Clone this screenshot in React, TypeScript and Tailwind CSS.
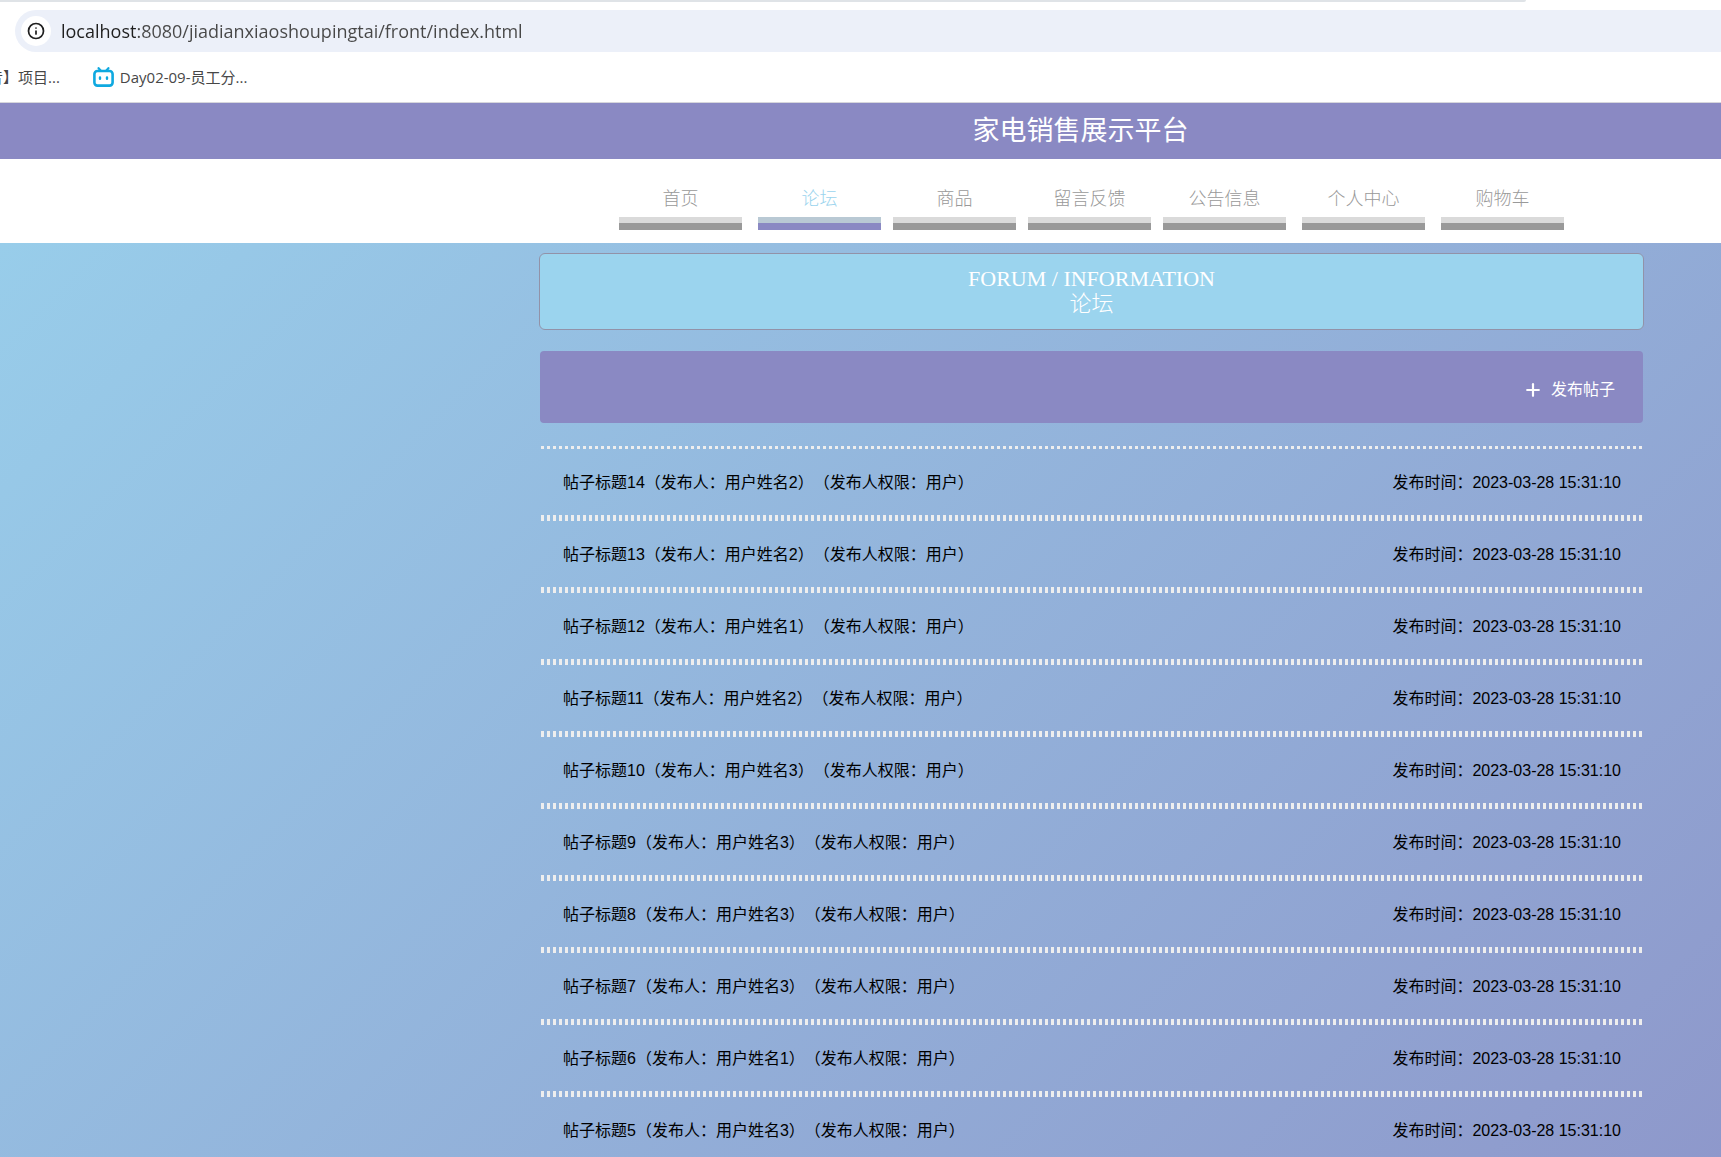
import React from "react";
import { Info, Plus } from "lucide-react";

interface NavItem {
  label: string;
  gap: string;
  active?: boolean;
}

interface Post {
  id: number;
  author: number;
}

const navItems: NavItem[] = [
  { label: "首页", gap: "" },
  { label: "论坛", gap: "ml-4", active: true },
  { label: "商品", gap: "ml-3" },
  { label: "留言反馈", gap: "ml-3" },
  { label: "公告信息", gap: "ml-3" },
  { label: "个人中心", gap: "ml-4" },
  { label: "购物车", gap: "ml-4" },
];

const posts: Post[] = [
  { id: 14, author: 2 },
  { id: 13, author: 2 },
  { id: 12, author: 1 },
  { id: 11, author: 2 },
  { id: 10, author: 3 },
  { id: 9, author: 3 },
  { id: 8, author: 3 },
  { id: 7, author: 3 },
  { id: 6, author: 1 },
  { id: 5, author: 3 },
];

const BilibiliIcon: React.FC = () => (
  <svg width="21" height="20" viewBox="0 0 21 20" fill="none" stroke="#0fa9e0" strokeLinecap="round">
    <path d="M5.6 1.2 7.8 3.8M15.4 1.2 13.2 3.8" strokeWidth="2.2" />
    <rect x="1.4" y="4" width="18.2" height="14.6" rx="3" strokeWidth="2.6" />
    <path d="M7 10.4v1.4M14 10.4v1.4" strokeWidth="2.4" />
  </svg>
);

const BrowserBar: React.FC = () => (
  <div className="h-[103px] shrink-0 border-b border-[#d6d6dc] bg-white font-['Open_Sans','Noto_Sans_CJK_SC',sans-serif]">
    <div className="mr-[195px] h-[2px] rounded-br-sm bg-[#dfe3e7]" />
    <div className="mt-2 ml-[15px] flex h-[42px] items-center rounded-l-full bg-[#ecf0f9] pl-[6px]">
      <button aria-label="Site information" className="flex h-[30px] w-[30px] items-center justify-center rounded-full bg-white">
        <Info className="h-[18px] w-[18px] text-[#1f1f1f]" strokeWidth={2.3} />
      </button>
      {/* host part of the address is darker than the path */}
      <input
        aria-label="Address"
        readOnly
        value="localhost:8080/jiadianxiaoshoupingtai/front/index.html"
        className="ml-[10px] flex-1 bg-[linear-gradient(90deg,#1f1f1f_76px,#474747_76px)] bg-clip-text text-[18px] text-transparent outline-none"
      />
    </div>
    <div className="mt-[15px] flex h-5 items-center overflow-hidden text-[15px] whitespace-nowrap text-[#474747]">
      <a href="#" className="-ml-[12px]">
        音】项目...
      </a>
      <a href="#" className="ml-[33px] flex items-center gap-[6px]">
        <BilibiliIcon />
        Day02-09-员工分...
      </a>
    </div>
  </div>
);

const NavTab: React.FC<NavItem> = ({ label, gap, active }) => (
  <a href="#" className={`flex w-[123px] flex-col items-center ${gap}`}>
    <span className={`h-[27px] text-[18px] leading-[18px] font-light ${active ? "text-[#9bd4ee]" : "text-[#999999]"}`}>
      {label}
    </span>
    <span className={`h-[6px] w-full ${active ? "bg-[#b9c9d4]" : "bg-[#dadada]"}`} />
    <span className={`h-[7px] w-full ${active ? "bg-[#8a89c3]" : "bg-[#999999]"}`} />
  </a>
);

const DottedLine: React.FC<{ thick?: boolean }> = ({ thick }) => (
  <div
    className={`bg-[repeating-linear-gradient(90deg,transparent_0_1px,#eeeeee_1px_4px,transparent_4px_6px)] ${
      thick ? "h-[6px]" : "h-[3px]"
    }`}
  />
);

const PostRow: React.FC<Post> = ({ id, author }) => (
  <li>
    <a href="#" className="flex h-[66px] items-center justify-between pt-px pr-[22px] pl-[23px]">
      <span>{`帖子标题${id}（发布人：用户姓名${author}）（发布人权限：用户）`}</span>
      <span>发布时间：2023-03-28 15:31:10</span>
    </a>
    <DottedLine thick />
  </li>
);

const App: React.FC = () => (
  <div className="flex h-screen flex-col overflow-hidden bg-white font-['Liberation_Sans','Noto_Sans_CJK_SC',sans-serif] [text-spacing-trim:space-all]">
    <BrowserBar />
    <header className="shrink-0">
      <h1 className="h-14 bg-[#8a89c3] pl-[440px] text-center text-[27px] leading-[56px] text-white">
        家电销售展示平台
      </h1>
      <nav className="flex h-[84px] justify-center pt-[31px] pl-[462px]">
        {navItems.map((item) => (
          <NavTab key={item.label} {...item} />
        ))}
      </nav>
    </header>

    <main className="flex-1 bg-[linear-gradient(135deg,#98cdea,#8e98cb)] pt-[10px] pr-[78px] pl-[540px] text-[16px] text-black">
      <h2 className="-mx-px h-[77px] rounded-md border border-[#9292a8] bg-[#9bd4ee] pt-3 text-center font-['Liberation_Serif','Noto_Sans_CJK_SC',serif] text-[22px] leading-[25px] text-white">
        FORUM / INFORMATION
        <br />
        <span className="font-light">论坛</span>
      </h2>
      <div className="mt-[21px] flex h-[72px] items-center justify-end rounded bg-[#8a89c3] pt-[6px] pr-[28px]">
        <button className="flex items-center gap-2 text-white">
          <Plus className="h-5 w-5" strokeWidth={2.6} />
          发布帖子
        </button>
      </div>
      <div className="mt-[23px]">
        <DottedLine />
        <ul>
          {posts.map((post) => (
            <PostRow key={post.id} {...post} />
          ))}
        </ul>
      </div>
    </main>
  </div>
);

export default App;
